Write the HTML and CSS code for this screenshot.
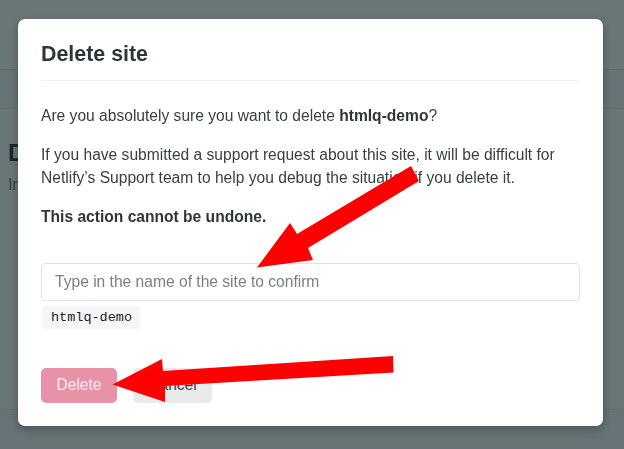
FILE: index.html
```html
<!DOCTYPE html>
<html lang="en">
<head>
<meta charset="utf-8">
<title>Delete site</title>
<link rel="stylesheet" href="styles.css">
</head>
<body>
<div class="page">
  <header class="page-header"></header>
  <section class="page-card">
    <h2 class="page-card-title">Danger zone</h2>
    <p class="page-card-text">Irreversible and destructive actions.</p>
  </section>
</div>

<div class="overlay">
  <div class="modal" role="dialog" aria-labelledby="modal-title">
    <div class="modal-header">
      <h1 id="modal-title" class="modal-title">Delete site</h1>
    </div>
    <div class="modal-body">
      <p class="text">Are you absolutely sure you want to delete <strong>htmlq-demo</strong>?</p>
      <p class="text">If you have submitted a support request about this site, it will be difficult for Netlify’s Support team to help you debug the situation if you delete it.</p>
      <p class="text text-strong">This action cannot be undone.</p>
      <input class="confirm-input" type="text" placeholder="Type in the name of the site to confirm">
      <div class="chip-row"><code class="chip">htmlq-demo</code></div>
      <div class="actions">
        <button class="btn btn-danger" type="button">Delete</button>
        <button class="btn btn-secondary" type="button">Cancel</button>
      </div>
    </div>
  </div>
</div>

<svg class="annotations" viewBox="0 0 624 449" width="624" height="449" aria-hidden="true">
  <polygon fill="#ff0000" points="411,166 419,181 308,248 313,260 257,267.5 290,223 297,234"/>
  <polygon fill="#ff0000" points="393,356 393.5,372.5 165,386 165,402 112.5,384.5 162,359 163,371"/>
</svg>
</body>
</html>
```

FILE: styles.css
```css
html, body {
  margin: 0;
  padding: 0;
}

body {
  width: 624px;
  height: 449px;
  overflow: hidden;
  font-family: "Liberation Sans", Arial, sans-serif;
  background: #f4f5f6;
}

.page {
  display: flex;
  flex-direction: column;
  height: 449px;
}

.page-header {
  height: 69px;
  background: #ffffff;
  border-bottom: 1px solid #d9dde0;
  flex: none;
}

.page-card {
  margin-top: 38px;
  height: 272px;
  background: #ffffff;
  border-top: 1px solid #e3e6e8;
  border-bottom: 1px solid #d9dde0;
  padding: 28px 8px 0;
}

.page-card-title {
  margin: 0;
  font-size: 24px;
  line-height: 32px;
  font-weight: 700;
  color: #0e1e25;
}

.page-card-text {
  margin: 4px 0 0;
  font-size: 15.6px;
  line-height: 24px;
  color: #545a5e;
}

.overlay {
  position: fixed;
  inset: 0;
  background: rgba(31, 47, 52, 0.66);
  padding: 19px 0 0 18px;
}

.modal {
  width: 585px;
  box-sizing: border-box;
  background: #ffffff;
  border-radius: 7px;
  padding: 21px 23px 23px;
  box-shadow: 0 3px 10px rgba(0, 0, 0, 0.3);
}

.modal-header {
  padding-bottom: 12px;
  border-bottom: 1px solid #f1f2f3;
}

.modal-title {
  margin: 0;
  font-size: 21.4px;
  line-height: 28px;
  font-weight: 700;
  color: #2c363b;
}

.modal-body {
  padding-top: 23px;
}

.text {
  margin: 0 0 16px;
  font-size: 15.6px;
  line-height: 23px;
  color: #363f44;
}

.text strong,
.text-strong {
  font-weight: 700;
  color: #2c363b;
}

.text-strong {
  margin-bottom: 34.5px;
}

.confirm-input {
  display: block;
  width: 100%;
  box-sizing: border-box;
  height: 38px;
  margin: 0;
  padding: 0 13px;
  border: 1px solid #dfe1e2;
  border-radius: 4px;
  font-family: "Liberation Sans", Arial, sans-serif;
  font-size: 15.6px;
  color: #333;
  background: #fff;
  outline: none;
}

.confirm-input::placeholder {
  color: #7a7f82;
  opacity: 1;
}

.chip-row {
  display: flex;
  margin-top: 5px;
}

.chip {
  display: block;
  height: 23px;
  line-height: 23px;
  padding: 0 8px 0 9px;
  margin-left: 1px;
  background: #f6f6f6;
  border-radius: 3px;
  font-family: "Liberation Mono", "DejaVu Sans Mono", monospace;
  font-size: 13.5px;
  color: #222;
}

.actions {
  display: flex;
  gap: 16px;
  margin-top: 39px;
}

.btn {
  height: 35px;
  border: none;
  border-radius: 5px;
  font-family: "Liberation Sans", Arial, sans-serif;
  font-size: 15.6px;
  padding: 0;
  cursor: pointer;
}

.btn-danger {
  width: 76px;
  background: #e892a8;
  color: #fbe9ee;
}

.btn-secondary {
  width: 79px;
  background: #e9ebeb;
  color: #3a4246;
}

.annotations {
  position: fixed;
  left: 0;
  top: 0;
  pointer-events: none;
}
```
